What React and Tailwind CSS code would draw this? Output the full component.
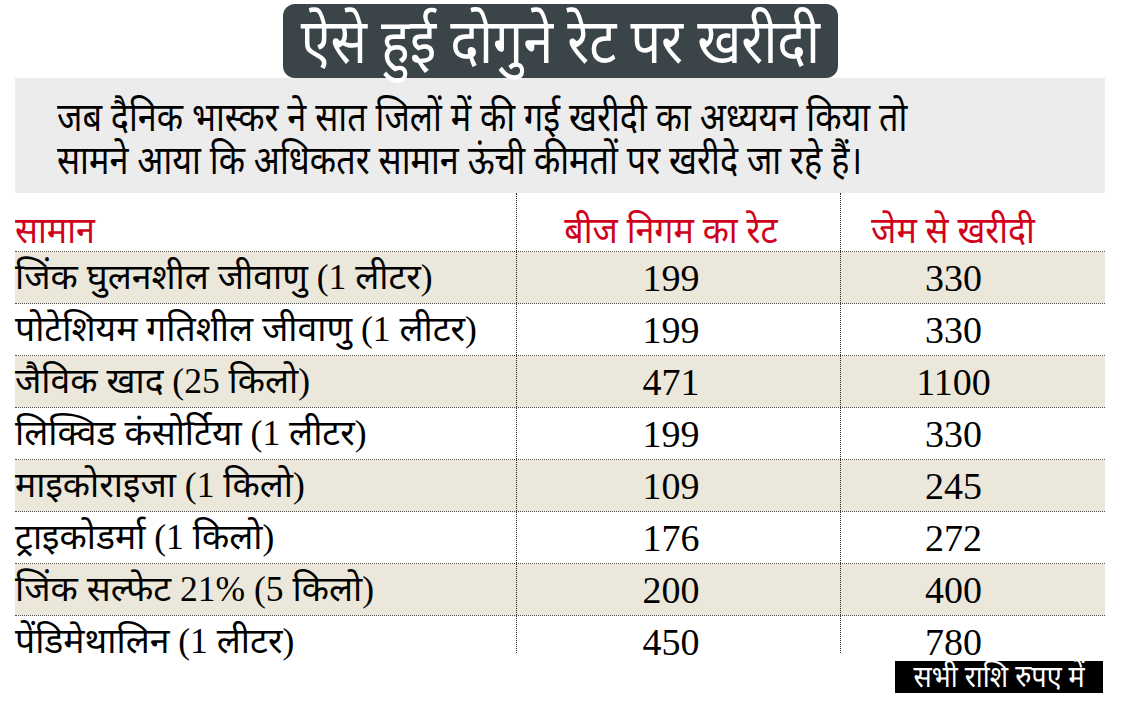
const rows = [
  ["जिंक घुलनशील जीवाणु (1 लीटर)", "199", "330"],
  ["पोटेशियम गतिशील जीवाणु (1 लीटर)", "199", "330"],
  ["जैविक खाद (25 किलो)", "471", "1100"],
  ["लिक्विड कंसोर्टिया (1 लीटर)", "199", "330"],
  ["माइकोराइजा (1 किलो)", "109", "245"],
  ["ट्राइकोडर्मा (1 किलो)", "176", "272"],
  ["जिंक सल्फेट 21% (5 किलो)", "200", "400"],
  ["पेंडिमेथालिन (1 लीटर)", "450", "780"],
];

const serif = { fontFamily: '"Liberation Serif", "Noto Sans", serif' };
const sans = { fontFamily: '"Noto Sans", sans-serif' };

export default function App() {
  return (
    <div className="w-[1126px] h-[702px] bg-white overflow-hidden relative">
      {/* title */}
      <div className="pt-[4px] pl-[283px]">
        <div className="bg-[#3b4448] rounded-[12px] w-[555px] h-[74px] flex items-center justify-center">
          <h1 className="inline-block text-white text-[62px] leading-[62px] scale-x-[0.87] whitespace-nowrap -mt-[4px]" style={sans}>
            ऐसे हुई दोगुने रेट पर खरीदी
          </h1>
        </div>
      </div>

      {/* intro */}
      <div className="ml-[15px] w-[1090px] bg-[#ececec] h-[115px] pl-[42px] pt-[16px] text-[40px] leading-[43px] text-black" style={sans}>
        <p className="origin-left scale-x-[0.855] whitespace-nowrap">जब दैनिक भास्कर ने सात जिलों में की गई खरीदी का अध्ययन किया तो</p>
        <p className="origin-left scale-x-[0.855] whitespace-nowrap">सामने आया कि अधिकतर सामान ऊंची कीमतों पर खरीदे जा रहे हैं।</p>
      </div>

      {/* table */}
      <div className="ml-[15px] w-[1090px] relative">
        <div className="absolute left-[501px] top-0 h-[460px] border-l border-dotted border-[#222]" />
        <div className="absolute left-[825px] top-0 h-[460px] border-l border-dotted border-[#222]" />

        <div className="grid grid-cols-[501px_324px_1fr] h-[59px] items-end pb-[4px] text-[37px] leading-none text-[#d0021b] border-b border-dotted border-[#555]" style={sans}>
          <div><span className="inline-block origin-left scale-x-[0.92]">सामान</span></div>
          <div className="text-center pr-[14px]"><span className="inline-block scale-x-[0.92] whitespace-nowrap">बीज निगम का रेट</span></div>
          <div className="text-center pr-[38px]"><span className="inline-block scale-x-[0.92] whitespace-nowrap">जेम से खरीदी</span></div>
        </div>

        {rows.map((r, i) => (
          <div
            key={i}
            className={`grid grid-cols-[501px_324px_1fr] h-[52px] items-center leading-none text-black ${i % 2 === 0 ? "bg-[#ebe7da]" : "bg-white"} ${i < rows.length - 1 ? "border-b border-dotted border-[#555]" : ""}`}
            style={serif}
          >
            <div className="text-[35.5px] whitespace-nowrap">{r[0]}</div>
            <div className="text-center pr-[14px] text-[38px]">{r[1]}</div>
            <div className="text-center pr-[38px] text-[38px]">{r[2]}</div>
          </div>
        ))}
      </div>

      {/* footnote */}
      <div className="absolute left-[895px] top-[661px] w-[208px] h-[32px] bg-black text-white text-[30px] leading-[32px] flex items-center justify-center" style={sans}>
        <span className="inline-block scale-x-[0.9] whitespace-nowrap -mt-[3px]">सभी राशि रुपए में</span>
      </div>
    </div>
  );
}
